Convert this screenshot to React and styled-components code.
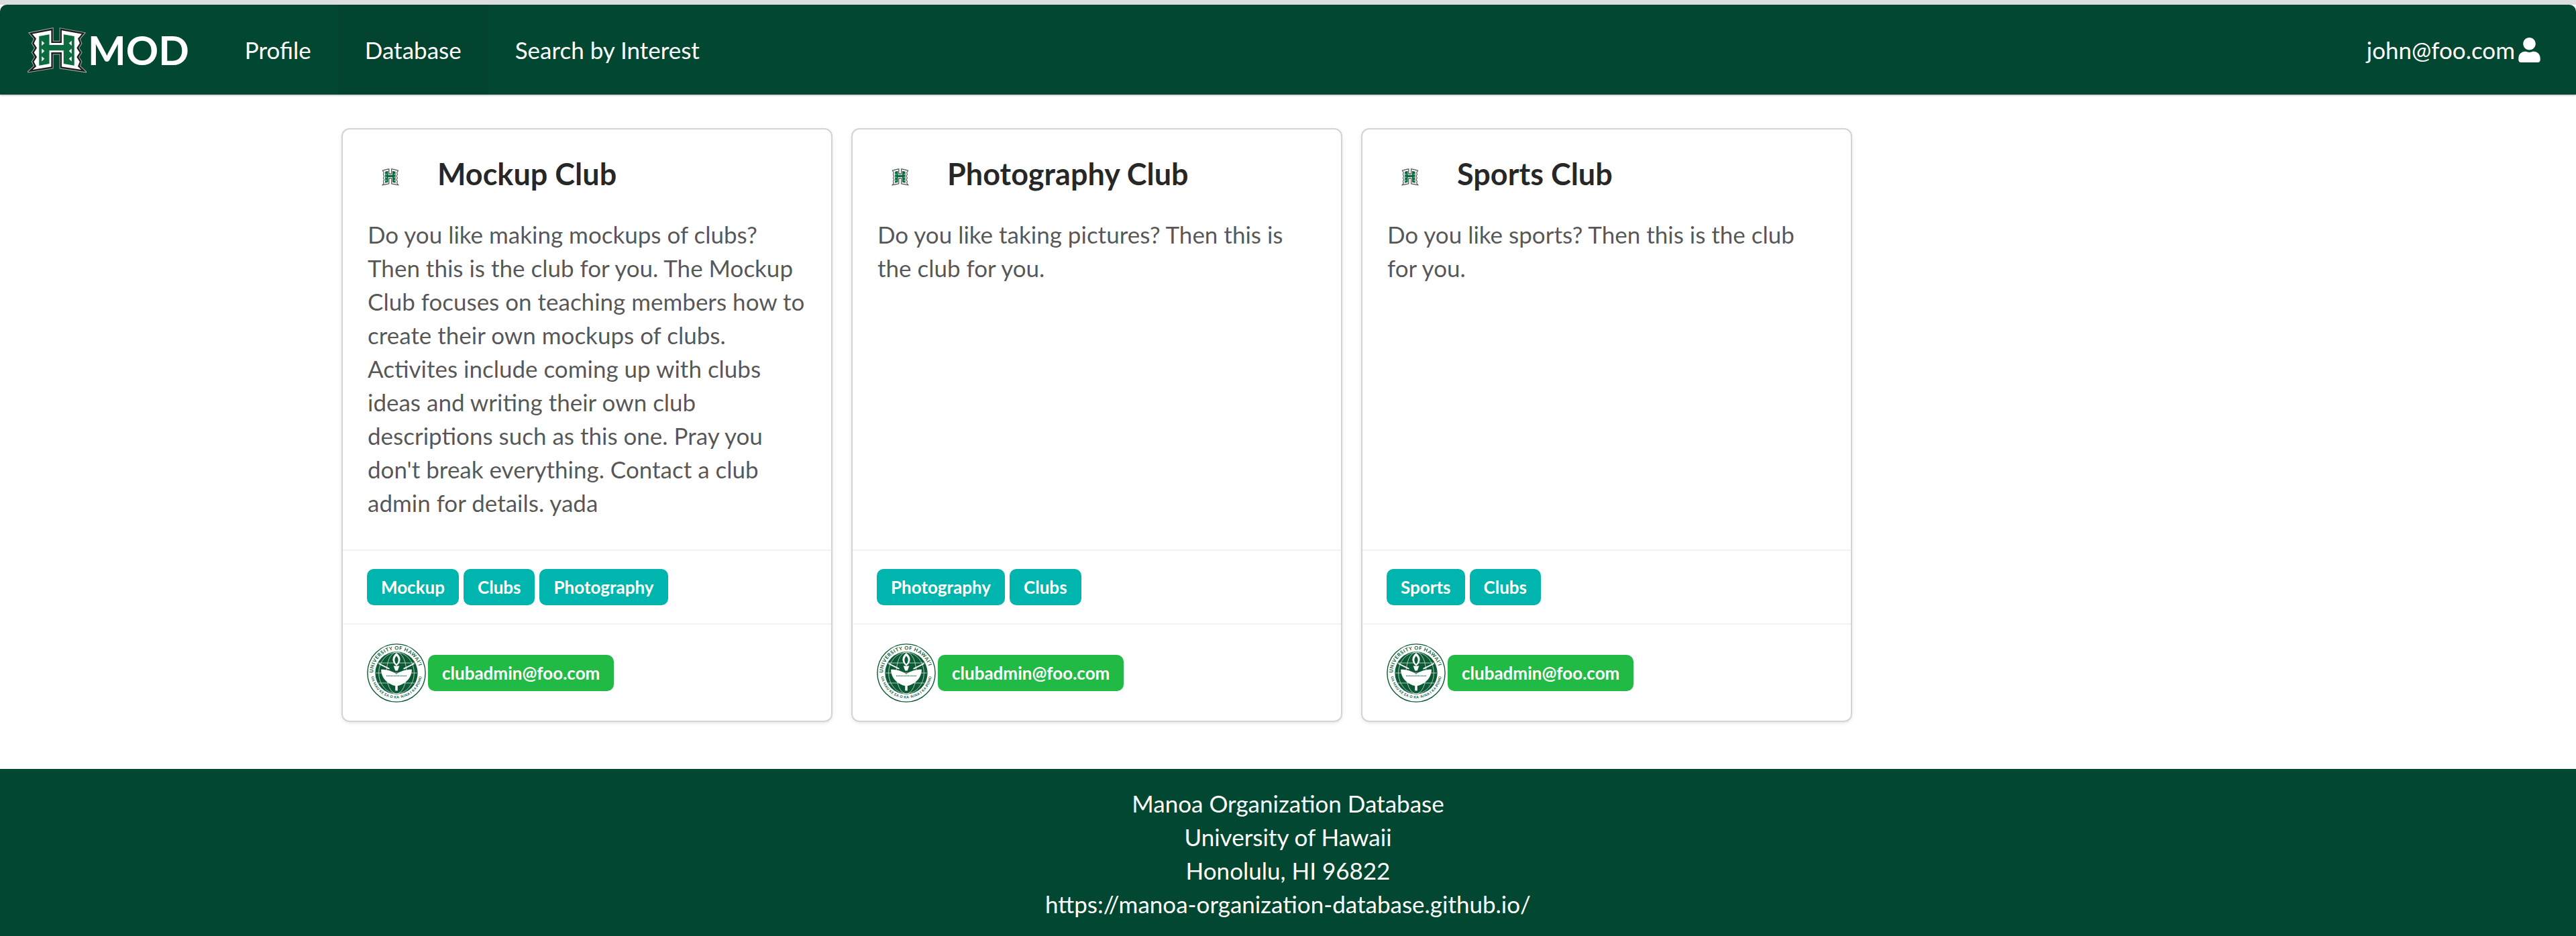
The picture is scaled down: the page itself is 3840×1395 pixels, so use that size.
import React from 'react';
import styled, { createGlobalStyle } from 'styled-components';
import { FaUser } from 'react-icons/fa';

const clubs = [
  {
    name: 'Mockup Club',
    description:
      "Do you like making mockups of clubs? Then this is the club for you. The Mockup Club focuses on teaching members how to create their own mockups of clubs. Activites include coming up with clubs ideas and writing their own club descriptions such as this one. Pray you don't break everything. Contact a club admin for details. yada",
    tags: ['Mockup', 'Clubs', 'Photography'],
  },
  {
    name: 'Photography Club',
    description: 'Do you like taking pictures? Then this is the club for you.',
    tags: ['Photography', 'Clubs'],
  },
  {
    name: 'Sports Club',
    description: 'Do you like sports? Then this is the club for you.',
    tags: ['Sports', 'Clubs'],
  },
];

function HLogo({ className }) {
  const outline =
    'M75,92 L170,74 L170,130 L210,130 L210,74 L310,92 L290,115 L298,135 L285,155 L298,175 L285,195 L298,215 L290,235 L312,255 L210,240 L210,178 L170,178 L170,240 L72,255 L95,235 L85,215 L98,195 L85,175 L98,155 L85,135 L95,115 Z';
  return (
    <svg className={className} viewBox="60 60 265 205" preserveAspectRatio="none">
      <path d={outline} fill="#fff" stroke="#a9abab" strokeWidth="13" strokeLinejoin="miter" />
      <path d={outline} fill="#fff" stroke="#1d1d1d" strokeWidth="7" strokeLinejoin="miter" />
      <path
        d="M112,104 L158,96 L158,142 L222,142 L222,96 L270,104 L270,232 L222,224 L222,166 L158,166 L158,224 L112,232 Z"
        fill="#0b6a3e"
      />
      <path d="M124,124 L136,134 L124,146 Z M124,158 L136,168 L124,180 Z M124,192 L136,202 L124,214 Z" fill="#fff" />
      <path d="M258,124 L246,134 L258,146 Z M258,158 L246,168 L258,180 Z M258,192 L246,202 L258,214 Z" fill="#fff" />
    </svg>
  );
}

function Seal({ id }) {
  return (
    <SealSvg viewBox="0 0 100 100">
      <defs>
        <path id={`${id}-top`} d="M10.5,50 A39.5,39.5 0 0 1 89.5,50" />
        <path id={`${id}-bottom`} d="M7,50 A43,43 0 0 0 93,50" />
      </defs>
      <circle cx="50" cy="50" r="49" fill="#fff" stroke="#0b5a35" strokeWidth="1.6" />
      <text fontFamily="Lato, sans-serif" fontSize="8.4" fontWeight="700" fill="#0b5a35" letterSpacing="0.75">
        <textPath href={`#${id}-top`}>UNIVERSITY OF HAWAI'I</textPath>
      </text>
      <text fontFamily="Lato, sans-serif" fontSize="6" fontWeight="700" fill="#0b5a35" letterSpacing="0.5">
        <textPath href={`#${id}-bottom`} startOffset="6">
          UA MAU KE EA O KA 'ĀINA I KA PONO
        </textPath>
      </text>
      <circle cx="50" cy="50" r="36" fill="#0b5a35" />
      <g fill="none" stroke="#d8e6dc" strokeWidth="0.9">
        <ellipse cx="50" cy="50" rx="17" ry="35" />
        <ellipse cx="50" cy="50" rx="30" ry="35" />
        <path d="M15,50 H85 M19,33 H81 M19,67 H81" />
      </g>
      <path d="M50,16 C58,22 59,32 50,38 C41,32 42,22 50,16 Z" fill="#fff" />
      <path d="M50,21 C54,25 54,31 50,35 C46,31 46,25 50,21 Z" fill="#0b5a35" />
      <path d="M45,38 H55 L52,46 H48 Z" fill="#fff" />
      <path d="M24,44 C34,44 44,47 50,52 C56,47 66,44 76,44 C76,58 66,68 52,72 L48,72 C34,68 24,58 24,44 Z" fill="#fff" />
      <path d="M48,70 H52 V80 H48 Z" fill="#fff" />
      <path d="M33,55 H67" stroke="#0b5a35" strokeWidth="1.6" strokeDasharray="1.5 1" />
      <path d="M20,34 L38,43 M80,34 L62,43" stroke="#fff" strokeWidth="2" />
    </SealSvg>
  );
}

function App() {
  return (
    <Page>
      <GlobalStyle />
      <Navbar>
        <Brand>
          <BrandLogo />
          MOD
        </Brand>
        <NavItem>Profile</NavItem>
        <NavItem $active>Database</NavItem>
        <NavItem>Search by Interest</NavItem>
        <UserItem>
          john@foo.com
          <FaUser size={37} />
        </UserItem>
      </Navbar>
      <Container>
        <Cards>
          {clubs.map((club) => (
            <Card key={club.name}>
              <CardContent>
                <CardHeader>
                  <SmallLogo />
                  <CardTitle>{club.name}</CardTitle>
                </CardHeader>
                <Description>{club.description}</Description>
              </CardContent>
              <TagRow>
                {club.tags.map((tag) => (
                  <Label key={tag} $color="#00b5ad">
                    {tag}
                  </Label>
                ))}
              </TagRow>
              <AdminRow>
                <Seal id={club.name.split(' ')[0]} />
                <Label $color="#21ba45">clubadmin@foo.com</Label>
              </AdminRow>
            </Card>
          ))}
        </Cards>
      </Container>
      <Footer>
        <div>Manoa Organization Database</div>
        <div>University of Hawaii</div>
        <div>Honolulu, HI 96822</div>
        <div>https://manoa-organization-database.github.io/</div>
      </Footer>
    </Page>
  );
}

export default App;

const GlobalStyle = createGlobalStyle`
  html, body {
    margin: 0;
    padding: 0;
    background: #fff;
    font-family: Lato, "Helvetica Neue", Arial, sans-serif;
    font-size: 35px;
    line-height: 50px;
  }
`;

const Page = styled.div`
  border-top: 7px solid #dcdde0;
  height: 1388px;
  display: flex;
  flex-direction: column;
`;

const Navbar = styled.nav`
  display: flex;
  align-items: stretch;
  height: 134px;
  box-sizing: border-box;
  background: #024731;
  color: #fff;
  border-radius: 10px 10px 0 0;
  box-shadow: 0 2px 2px #d4d4d5;
`;

const Brand = styled.div`
  display: flex;
  align-items: center;
  padding-left: 41px;
  padding-right: 43px;
  font-size: 60px;
  font-weight: 700;
`;

const BrandLogo = styled(HLogo)`
  width: 88px;
  height: 70px;
  margin-right: 2px;
`;

const NavItem = styled.div`
  display: flex;
  align-items: center;
  padding: 0 40px;
  background: ${(p) => (p.$active ? 'rgba(0, 0, 0, 0.05)' : 'transparent')};
`;

const UserItem = styled(NavItem)`
  margin-left: auto;
  padding-right: 51px;
  gap: 3px;
`;

const Container = styled.main`
  width: 2818px;
  margin: 0 auto;
  flex: 1;
`;

const Cards = styled.div`
  display: flex;
  gap: 32px;
  padding-top: 52px;
`;

const Card = styled.article`
  width: 728px;
  height: 881px;
  box-sizing: border-box;
  display: flex;
  flex-direction: column;
  border-radius: 10px;
  background: #fff;
  box-shadow: 0 2px 7px 0 #d4d4d5, 0 0 0 2px #d4d4d5;
`;

const CardContent = styled.div`
  height: 626px;
  box-sizing: border-box;
  padding: 36px 37px 0;
`;

const CardHeader = styled.div`
  display: flex;
  align-items: center;
  height: 60px;
  margin-bottom: 35px;
`;

const SmallLogo = styled(HLogo)`
  width: 26px;
  height: 27px;
  margin: 8px 57px 0 21px;
`;

const CardTitle = styled.h3`
  margin: 0;
  font-size: 45px;
  line-height: 60px;
  font-weight: 700;
  color: rgba(0, 0, 0, 0.85);
`;

const Description = styled.p`
  margin: 0;
  color: rgba(0, 0, 0, 0.68);
`;

const TagRow = styled.div`
  height: 110px;
  box-sizing: border-box;
  display: flex;
  align-items: center;
  gap: 7px;
  padding: 0 36px;
  border-top: 2px solid #f1f1f1;
`;

const AdminRow = styled.div`
  flex: 1;
  display: flex;
  align-items: center;
  gap: 3px;
  padding: 0 36px;
  border-top: 2px solid #f1f1f1;
`;

const SealSvg = styled.svg`
  width: 88px;
  height: 88px;
  flex: none;
`;

const Label = styled.span`
  display: inline-flex;
  align-items: center;
  height: 54px;
  padding: 0 21px;
  border-radius: 10px;
  background: ${(p) => p.$color};
  color: #fff;
  font-size: 26px;
  font-weight: 700;
  line-height: 1;
`;

const Footer = styled.footer`
  height: 249px;
  box-sizing: border-box;
  padding-top: 26px;
  background: #024731;
  color: #fff;
  text-align: center;
`;
